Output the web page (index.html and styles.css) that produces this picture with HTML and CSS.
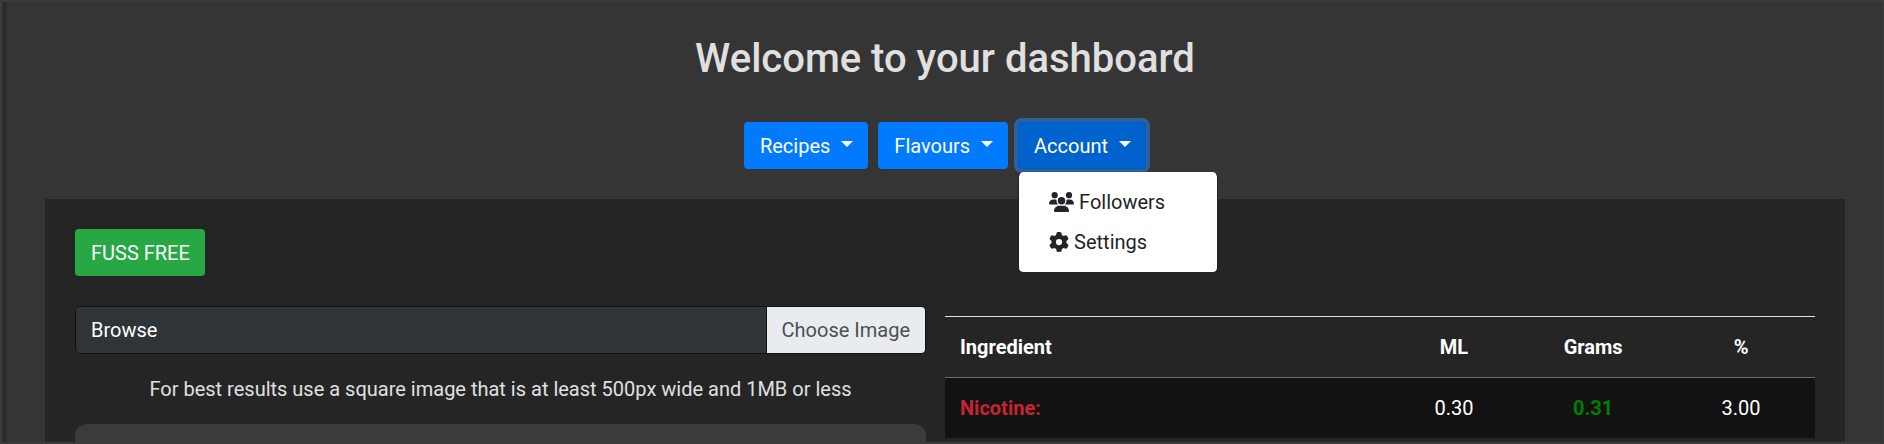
FILE: index.html
```html
<!DOCTYPE html>
<html lang="en">
<head>
<meta charset="utf-8">
<meta name="viewport" content="width=device-width, initial-scale=1">
<title>Dashboard</title>
<link rel="stylesheet" href="styles.css">
</head>
<body>
<div class="app">
  <header class="intro">
    <h1 class="title">Welcome to your dashboard</h1>
    <nav class="menus" aria-label="Dashboard">
      <button class="btn btn-primary" type="button" aria-haspopup="true">Recipes<span class="caret"></span></button>
      <button class="btn btn-primary" type="button" aria-haspopup="true">Flavours<span class="caret"></span></button>
      <div class="dropdown">
        <button class="btn btn-primary open" type="button" aria-haspopup="true" aria-expanded="true">Account<span class="caret"></span></button>
        <div class="dropdown-menu">
          <a class="dropdown-item" href="#followers">
            <svg class="icon-users" viewBox="0 0 640 512" aria-hidden="true"><path d="M144 0a80 80 0 1 1 0 160A80 80 0 1 1 144 0zM512 0a80 80 0 1 1 0 160A80 80 0 1 1 512 0zM0 298.7C0 239.8 47.8 192 106.7 192h42.7c15.9 0 31 3.5 44.6 9.7c-1.3 7.2-1.9 14.7-1.9 22.3c0 38.2 16.8 72.5 43.3 96c-.2 0-.4 0-.7 0H21.3C9.6 320 0 310.4 0 298.7zM405.3 320c-.2 0-.4 0-.7 0c26.6-23.5 43.3-57.8 43.3-96c0-7.6-.7-15-1.9-22.3c13.6-6.3 28.7-9.7 44.6-9.7h42.7C592.2 192 640 239.8 640 298.7c0 11.8-9.6 21.3-21.3 21.3H405.3zM224 224a96 96 0 1 1 192 0 96 96 0 1 1 -192 0zM128 485.3C128 411.7 187.7 352 261.3 352H378.7C452.3 352 512 411.7 512 485.3c0 14.7-11.9 26.7-26.7 26.7H154.7c-14.7 0-26.7-11.9-26.7-26.7z"/></svg>
            Followers</a>
          <a class="dropdown-item" href="#settings">
            <svg class="icon-gear" viewBox="0 0 512 512" aria-hidden="true"><path d="M495.9 166.6c3.2 8.7 .5 18.4-6.4 24.6l-43.3 39.4c1.1 8.3 1.7 16.8 1.7 25.4s-.6 17.1-1.7 25.4l43.3 39.4c6.9 6.2 9.6 15.9 6.4 24.6c-4.4 11.9-9.7 23.3-15.8 34.3l-4.7 8.1c-6.6 11-14 21.4-22.1 31.2c-5.9 7.2-15.7 9.6-24.5 6.8l-55.7-17.7c-13.4 10.3-28.2 18.9-44 25.4l-12.5 57.1c-2 9.1-9 16.3-18.2 17.8c-13.8 2.3-28 3.5-42.5 3.5s-28.7-1.2-42.5-3.5c-9.2-1.5-16.2-8.7-18.2-17.8l-12.5-57.1c-15.8-6.5-30.6-15.1-44-25.4L83.1 425.9c-8.8 2.8-18.6 .3-24.5-6.8c-8.1-9.8-15.5-20.2-22.1-31.2l-4.7-8.1c-6.1-11-11.4-22.4-15.8-34.3c-3.2-8.7-.5-18.4 6.4-24.6l43.3-39.4C64.6 273.1 64 264.6 64 256s.6-17.1 1.7-25.4L22.4 191.2c-6.9-6.2-9.6-15.9-6.4-24.6c4.4-11.9 9.7-23.3 15.8-34.3l4.7-8.1c6.6-11 14-21.4 22.1-31.2c5.9-7.2 15.7-9.6 24.5-6.8l55.7 17.7c13.4-10.3 28.2-18.9 44-25.4l12.5-57.1c2-9.1 9-16.3 18.2-17.8C227.3 1.2 241.5 0 256 0s28.7 1.2 42.5 3.5c9.2 1.5 16.2 8.7 18.2 17.8l12.5 57.1c15.8 6.5 30.6 15.1 44 25.4l55.7-17.7c8.8-2.8 18.6-.3 24.5 6.8c8.1 9.8 15.5 20.2 22.1 31.2l4.7 8.1c6.1 11 11.4 22.4 15.8 34.3zM256 336a80 80 0 1 0 0-160 80 80 0 1 0 0 160z"/></svg>
            Settings</a>
        </div>
      </div>
    </nav>
  </header>

  <main class="panel">
    <button class="btn btn-success" type="button">FUSS FREE</button>
    <div class="columns">
      <section class="upload">
        <input class="file-input" id="recipe-image" type="file" accept="image/*">
        <label class="file" for="recipe-image">
          <span class="file-name">Browse</span>
          <span class="file-action">Choose Image</span>
        </label>
        <p class="hint">For best results use a square image that is at least 500px wide and 1MB or less</p>
        <div class="preview"></div>
      </section>
      <section class="recipe">
        <table class="ingredients">
          <colgroup><col class="col-name"><col class="col-ml"><col class="col-grams"><col class="col-percent"></colgroup>
          <thead>
            <tr><th scope="col">Ingredient</th><th scope="col">ML</th><th scope="col">Grams</th><th scope="col">%</th></tr>
          </thead>
          <tbody>
            <tr><th class="nicotine" scope="row">Nicotine:</th><td>0.30</td><td class="grams">0.31</td><td>3.00</td></tr>
          </tbody>
        </table>
      </section>
    </div>
  </main>
</div>
</body>
</html>
```
FILE: styles.css
```css
*,
*::before,
*::after {
  box-sizing: border-box;
}

body {
  margin: 0;
  background: #353535;
  color: #e0e0e0;
  font: 400 20px/30px Roboto, "Liberation Sans", sans-serif;
}

.app {
  display: flex;
  flex-direction: column;
  height: 100vh;
  overflow: hidden;
  border: 2px solid #3b3b3b;
  border-right-width: 1px;
  box-shadow: inset 5px 0 #2c2c2c;
  padding-left: 5px;
}

.intro {
  padding: 33px 38px 30px;
}

.title {
  margin: 0 0 39px;
  font-size: 40px;
  font-weight: 500;
  line-height: 48px;
  text-align: center;
}

.menus {
  display: flex;
  justify-content: center;
  gap: 10px;
}

.btn {
  display: inline-flex;
  align-items: center;
  padding: 9px 15px 8px 16px;
  border: 0;
  border-radius: 4px;
  color: #fff;
  font: inherit;
  cursor: pointer;
}

.btn-primary {
  background: #007bff;
}

.btn-primary.open {
  background: #0062cc;
  box-shadow: inset 0 0 0 1px #005cbf, 0 0 0 4px #2c619b;
}

.btn-success {
  background: #28a745;
}

.caret {
  margin: 0 0 5px 11px;
  border: 6px solid transparent;
  border-top-color: #fff;
  border-bottom: 0;
}

.dropdown {
  position: relative;
  display: flex;
}

.dropdown-menu {
  position: absolute;
  z-index: 1;
  top: 100%;
  left: 0;
  width: 200px;
  margin-top: 3px;
  padding: 10px 0;
  border: 1px solid #222;
  border-top: 0;
  border-radius: 5px;
  background: #fff;
  background-clip: padding-box;
}

.dropdown-item {
  display: flex;
  align-items: center;
  gap: 5px;
  padding: 5px 30px;
  color: #212529;
  text-decoration: none;
}

.icon-users,
.icon-gear {
  flex: none;
  width: 25px;
  height: 20px;
  fill: currentColor;
}

.icon-gear {
  width: 20px;
}

.panel {
  flex: 1;
  min-height: 0;
  margin: 0 38px;
  padding: 30px;
  background: #252525;
}

.columns {
  display: grid;
  grid-template-columns: 851fr 870fr;
  gap: 19px;
  margin-top: 30px;
}

.upload {
  position: relative;
}

.file-input {
  position: absolute;
  width: 100%;
  height: 48px;
  margin: 0;
  opacity: 0;
}

.file {
  display: flex;
  border: 1px solid #111;
  border-radius: 5px;
  background: #2f3439;
  color: #fff;
  overflow: hidden;
}

.file-name {
  flex: 1;
  padding: 8px 15px;
}

.file-action {
  padding: 8px 15px;
  border-left: 1px solid #111;
  background: #e9ecef;
  color: #495057;
}

.hint {
  margin: 20px 0;
  text-align: center;
}

.preview {
  height: 400px;
  border-radius: 12px;
  background: #3b3b3b;
}

.recipe {
  padding-top: 10px;
}

.ingredients {
  width: 100%;
  table-layout: fixed;
  border-collapse: collapse;
  color: #fff;
  text-align: center;
}

.col-name {
  width: 51%;
}

.col-grams,
.col-percent {
  width: 17%;
}

.ingredients th,
.ingredients td {
  padding: 15px;
}

.ingredients th {
  font-weight: 700;
}

.ingredients th:first-child {
  text-align: left;
}

.ingredients thead tr {
  border-top: 1px solid #dee2e6;
  border-bottom: 1px solid #6b6b6b;
}

.ingredients tbody tr {
  background: #121212;
}

.ingredients .nicotine {
  color: #c82333;
}

.ingredients .grams {
  color: #008000;
  font-weight: 700;
}
```
